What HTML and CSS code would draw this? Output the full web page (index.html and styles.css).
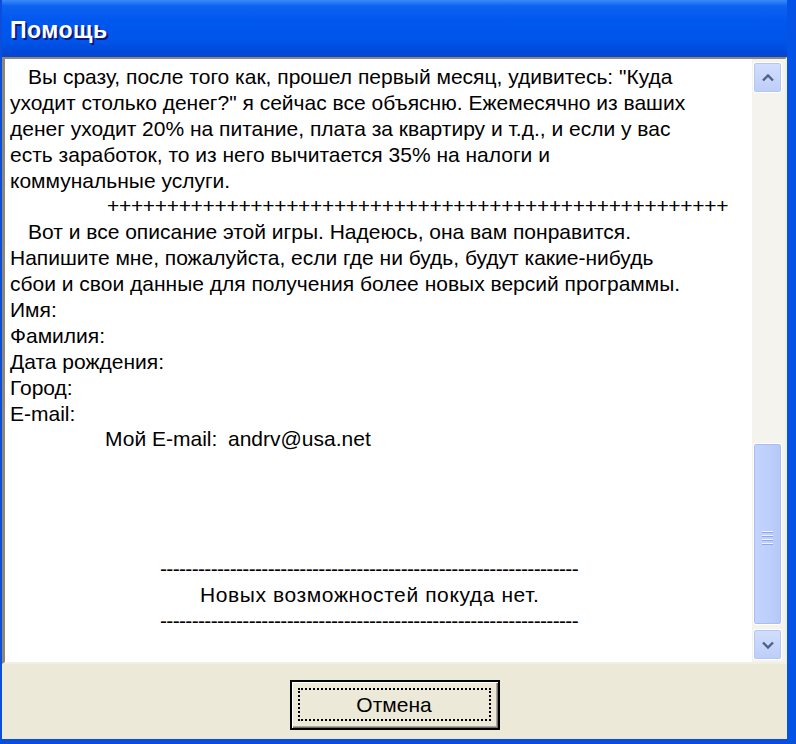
FILE: index.html
```html
<!DOCTYPE html>
<html lang="ru">
<head>
<meta charset="utf-8">
<title>Помощь</title>
<link rel="stylesheet" href="styles.css">
</head>
<body>
<div class="window">
  <div class="titlebar"><span class="title">Помощь</span></div>
  <div class="client">
    <div class="memo">
      <div class="text">
        <div class="line ind">Вы сразу, после того как, прошел первый месяц, удивитесь: "Куда</div>
        <div class="line">уходит столько денег?" я сейчас все объясню. Ежемесячно из ваших</div>
        <div class="line">денег уходит 20% на питание, плата за квартиру и т.д., и если у вас</div>
        <div class="line">есть заработок, то из него вычитается 35% на налоги и</div>
        <div class="line">коммунальные услуги.</div>
        <div class="line plus">++++++++++++++++++++++++++++++++++++++++++++++++++++</div>
        <div class="line ind">Вот и все описание этой игры. Надеюсь, она вам понравится.</div>
        <div class="line">Напишите мне, пожалуйста, если где ни будь, будут какие-нибудь</div>
        <div class="line">сбои и свои данные для получения более новых версий программы.</div>
        <div class="line">Имя:</div>
        <div class="line">Фамилия:</div>
        <div class="line">Дата рождения:</div>
        <div class="line">Город:</div>
        <div class="line">E-mail:</div>
        <div class="line mail"><span class="mail-label">Мой E-mail:</span><span>andrv@usa.net</span></div>
        <div class="line"></div>
        <div class="line"></div>
        <div class="line"></div>
        <div class="line"></div>
        <div class="line dash">------------------------------------------------------------------</div>
        <div class="line news">Новых возможностей покуда нет.</div>
        <div class="line dash">------------------------------------------------------------------</div>
      </div>
      <div class="scrollbar">
        <div class="sb-btn">
          <svg width="12" height="8" viewBox="0 0 12 8"><path d="M1 6.5 L6 1.5 L11 6.5" fill="none" stroke="#4d6185" stroke-width="2.4"/></svg>
        </div>
        <div class="track">
          <div class="thumb">
            <div class="grip"><i></i><i></i><i></i><i></i></div>
          </div>
        </div>
        <div class="sb-btn">
          <svg width="12" height="8" viewBox="0 0 12 8"><path d="M1 1.5 L6 6.5 L11 1.5" fill="none" stroke="#4d6185" stroke-width="2.4"/></svg>
        </div>
      </div>
    </div>
    <div class="footer">
      <button class="btn"><span class="focus">Отмена</span></button>
    </div>
  </div>
</div>
</body>
</html>
```
FILE: styles.css
```css
html, body {
  margin: 0;
  padding: 0;
}
body {
  width: 796px;
  height: 744px;
  overflow: hidden;
  background: #0055ea;
  font-family: "Liberation Sans", Arial, sans-serif;
}
.window {
  width: 796px;
  height: 744px;
  box-sizing: border-box;
  display: flex;
  flex-direction: column;
  border-left: 2px solid #0a4fdc;
  border-right: 9px solid #0553e6;
  border-bottom: 5px solid #0a4ddc;
}
.titlebar {
  height: 57px;
  flex: none;
  display: flex;
  align-items: center;
  padding-left: 8px;
  background: linear-gradient(#3a8af8 0px, #0d62f0 6px, #0058ee 20px, #0055ea 40px, #0049da 52px, #0a45c8 57px);
}
.title {
  color: #fff;
  font-weight: bold;
  font-size: 23px;
  letter-spacing: 0.5px;
  text-shadow: 2px 2px 0 #0a1a80;
  margin-top: 3px;
}
.client {
  flex: 1;
  display: flex;
  flex-direction: column;
  background: #ece9d8;
}
.memo {
  height: 607px;
  box-sizing: border-box;
  display: flex;
  background: #fff;
  border-top: 2px solid #8c897c;
  border-left: 3px solid #8c897c;
  border-right: 2px solid #f1efe2;
  border-bottom: 2px solid #f1efe2;
}
.text {
  flex: 1;
  padding: 5px 0 0 5px;
  font-size: 21px;
  line-height: 25.9px;
  color: #000;
  overflow: hidden;
}
.line {
  height: 25.9px;
  white-space: nowrap;
}
.ind { padding-left: 18px; }
.plus {
  padding-left: 97px;
  letter-spacing: -0.32px;
}
.mail { padding-left: 95px; }
.mail-label {
  display: inline-block;
  width: 123px;
}
.dash {
  padding-left: 150px;
  letter-spacing: -0.66px;
}
.news {
  padding-left: 190px;
  letter-spacing: 0.6px;
}

.scrollbar {
  width: 33px;
  flex: none;
  box-sizing: border-box;
  padding: 3px 3px 2px 1px;
  background: #f4f3ee;
  display: flex;
  flex-direction: column;
}
.sb-btn {
  height: 31px;
  box-sizing: border-box;
  border: 1px solid #fff;
  border-radius: 3px;
  background: linear-gradient(#d2defd, #bccdfa);
  box-shadow: inset 0 0 0 1px #b3c6f4;
  display: flex;
  align-items: center;
  justify-content: center;
  flex: none;
}
.track {
  flex: 1;
  display: flex;
  flex-direction: column;
  justify-content: flex-end;
  padding-bottom: 4px;
}
.thumb {
  height: 182px;
  box-sizing: border-box;
  border: 1px solid #fff;
  border-radius: 3px;
  background: linear-gradient(90deg, #c4d4fc, #bccefb 60%, #b4c7f6);
  box-shadow: inset 0 0 0 1px #a9bff1;
  display: flex;
  align-items: center;
  justify-content: center;
}
.grip {
  display: flex;
  flex-direction: column;
  gap: 2px;
  margin-top: 8px;
}
.grip i {
  display: block;
  width: 11px;
  height: 1px;
  background: #eef3ff;
  border-bottom: 1px solid #8ea8e6;
}
.footer {
  flex: 1;
  display: flex;
  justify-content: center;
  padding-top: 16px;
}
.btn {
  width: 210px;
  height: 50px;
  box-sizing: border-box;
  padding: 0;
  margin: 0;
  background: #ece9d8;
  border: 2px solid #000;
  box-shadow: inset 1px 1px 0 #fff, inset -1px -1px 0 #716f64, inset -2px -2px 0 #aca899;
  font-family: "Liberation Sans", Arial, sans-serif;
  font-size: 21px;
  color: #000;
  display: flex;
  align-items: stretch;
  justify-content: stretch;
}
.focus {
  flex: 1;
  margin: 6px 7px 7px 6px;
  border: 2px dotted #000;
  display: flex;
  align-items: center;
  justify-content: center;
}
```
